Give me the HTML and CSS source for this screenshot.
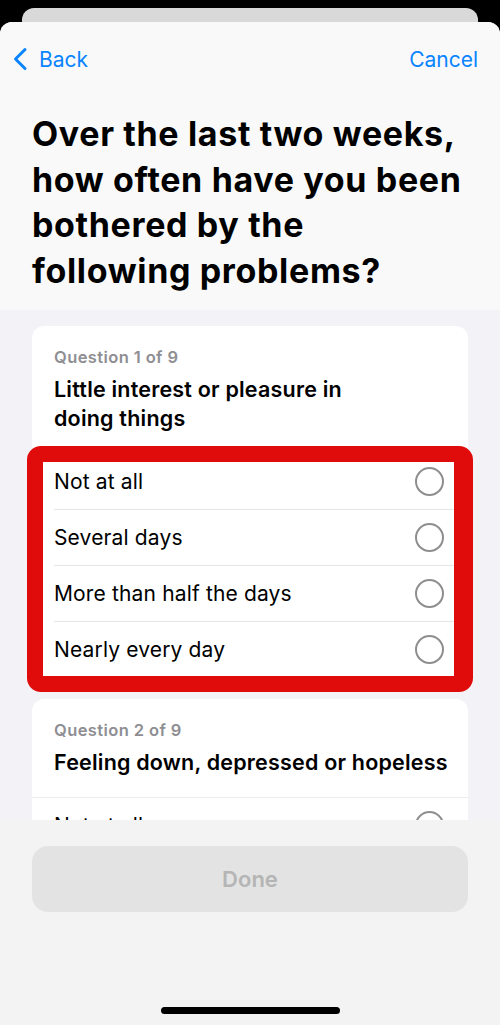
FILE: index.html
```html
<!DOCTYPE html>
<html>
  <head>
    <title>Questionnaire</title>
    <meta name="viewport" content="width=device-width, initial-scale=1"/>
    <link rel="stylesheet" href="styles.css">
  </head>
  <body>
    <div class='behind'></div>

    <div class='sheet'>
      <header class='top'>
        <nav class='nav'>
          <a class='nav-back'>
            <svg width="16" height="24" viewBox="0 0 16 24">
              <polyline points="13,2.5 3.5,12 13,21.5" fill="none" stroke="#0a84ff" stroke-width="3" stroke-linecap="round" stroke-linejoin="round"/>
            </svg>
            <span>Back</span>
          </a>
          <a class='nav-cancel'>Cancel</a>
        </nav>
        <h1>Over the last two weeks,<br>how often have you been<br>bothered by the<br>following problems?</h1>
      </header>

      <main class='scroll'>
        <section class='card'>
          <div class='card-head'>
            <p class='label'>Question 1 of 9</p>
            <h2>Little interest or pleasure in<br>doing things</h2>
          </div>
          <div class='options'>
            <div class='option'><span>Not at all</span><i class='radio'></i></div>
            <div class='option'><span>Several days</span><i class='radio'></i></div>
            <div class='option'><span>More than half the days</span><i class='radio'></i></div>
            <div class='option'><span>Nearly every day</span><i class='radio'></i></div>
            <div class='highlight'></div>
          </div>
        </section>

        <section class='card'>
          <div class='card-head'>
            <p class='label'>Question 2 of 9</p>
            <h2>Feeling down, depressed or hopeless</h2>
          </div>
          <div class='options'>
            <div class='option'><span>Not at all</span><i class='radio'></i></div>
            <div class='option'><span>Several days</span><i class='radio'></i></div>
          </div>
        </section>
      </main>

      <footer class='bottom'>
        <button class='done' disabled>Done</button>
        <div class='home-bar'></div>
      </footer>
    </div>
  </body>
</html>
```

FILE: styles.css
```css
* {box-sizing: border-box;}

html {
  background-color: #000;
}

body {
  margin: 0;
  width: 500px;
  height: 1025px;
  overflow: hidden;
  font-family: Inter, "Noto Sans", sans-serif;
  color: #000;
}

.behind {
  margin: 8px 22px 0;
  height: 14px;
  background-color: #d9d9d9;
  border-radius: 12px 12px 0 0;
}

.sheet {
  height: 1003px;
  display: flex;
  flex-direction: column;
  background-color: #f2f2f7;
  border-radius: 12px 12px 0 0;
  overflow: hidden;
}

.top {
  height: 288px;
  flex-shrink: 0;
  background-color: #f9f9fa;
  padding: 15px 22px 0 12px;
}

.nav {
  height: 44px;
  display: flex;
  align-items: center;
  justify-content: space-between;
  color: #0a84ff;
  font-size: 21px;
}

.nav-back {
  display: flex;
  align-items: center;
  gap: 11px;
}

.nav-back svg {
  display: block;
}

h1 {
  margin: 30px 0 0 20px;
  font-size: 34px;
  line-height: 45.6px;
  font-weight: 700;
  letter-spacing: 0.65px;
  white-space: nowrap;
}

.scroll {
  flex: 1;
  overflow: hidden;
  padding: 16px 32px 0;
  display: flex;
  flex-direction: column;
  gap: 21px;
}

.card {
  background-color: #fff;
  border-radius: 12px;
  flex-shrink: 0;
}

.card-head {
  padding: 21px 22px 20px;
  border-bottom: 1px solid #ececef;
}

.label {
  margin: 0;
  font-size: 16.5px;
  line-height: 20px;
  font-weight: 600;
  letter-spacing: 0.4px;
  color: #8e8e93;
}

h2 {
  margin: 8px 0 0;
  font-size: 21.5px;
  line-height: 29px;
  font-weight: 600;
  letter-spacing: 0.2px;
  white-space: nowrap;
}

.options {
  position: relative;
}

.option {
  height: 56px;
  margin-left: 22px;
  padding-right: 24px;
  display: flex;
  align-items: center;
  justify-content: space-between;
  font-size: 21px;
  letter-spacing: 0.15px;
  border-bottom: 1px solid #e6e6e9;
}

.option:last-of-type {
  border-bottom: none;
}

.radio {
  width: 29px;
  height: 29px;
  border: 2px solid #8e8e8e;
  border-radius: 50%;
}

.highlight {
  position: absolute;
  top: -8px;
  bottom: -14px;
  left: -5px;
  right: -5px;
  border-style: solid;
  border-color: #e00b0b;
  border-width: 16px 19px 16px 16px;
  border-radius: 14px;
}

.bottom {
  height: 205px;
  flex-shrink: 0;
  background-color: #f3f3f3;
  padding: 26px 32px 0;
  display: flex;
  flex-direction: column;
  align-items: center;
}

.done {
  width: 100%;
  height: 66px;
  border: none;
  border-radius: 16px;
  background-color: #e3e3e3;
  color: #b5b5b5;
  font-family: inherit;
  font-size: 22px;
  font-weight: 600;
}

.home-bar {
  margin-top: 95px;
  width: 179px;
  height: 7px;
  border-radius: 4px;
  background-color: #000;
}
```
